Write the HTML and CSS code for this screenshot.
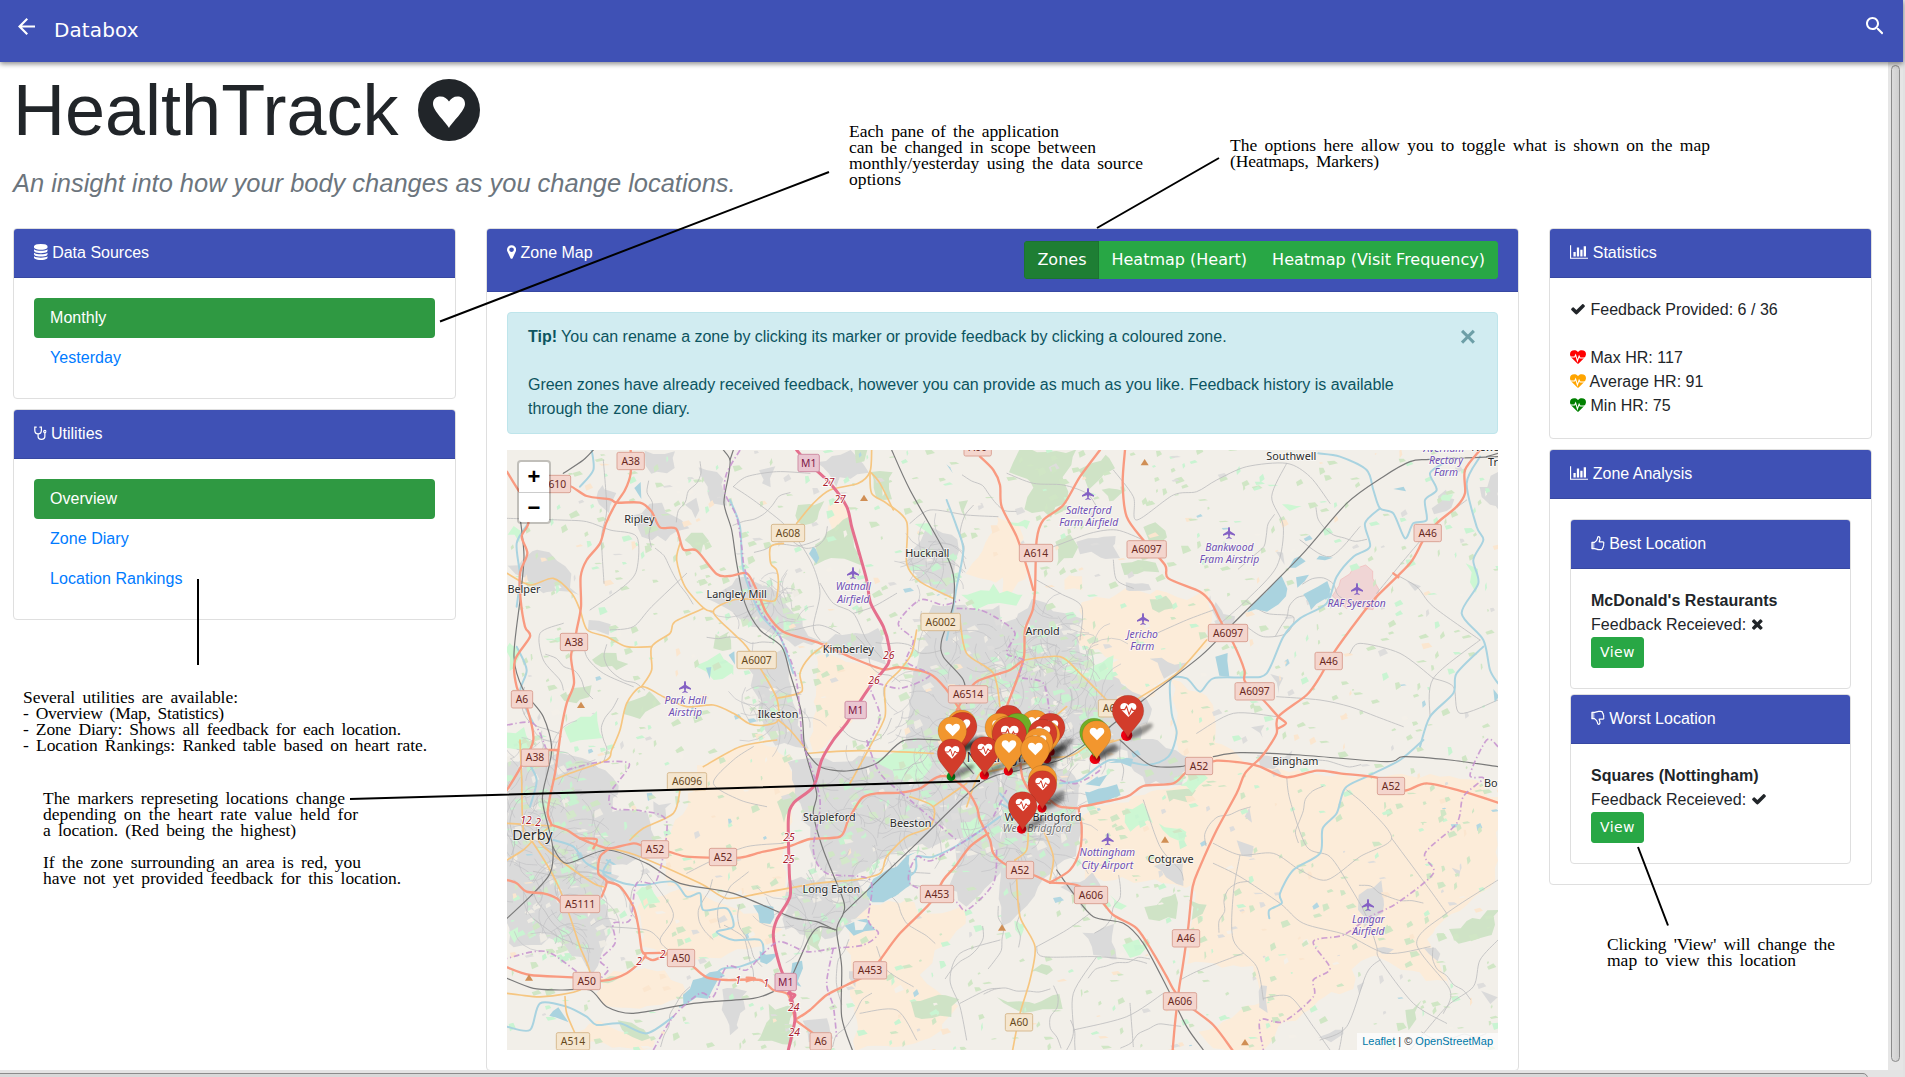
FILE: index.html
```html
<!DOCTYPE html>
<html lang="en">
<head>
<meta charset="utf-8">
<title>Databox - HealthTrack</title>
<link rel="stylesheet" href="styles.css">
</head>
<body>
<svg class="defs" width="0" height="0">
  <defs>
    <symbol id="database" viewBox="128 0 1536 1792"><path d="M896 768q237 0 443-43t325-127v170q0 69-103 128t-280 93.500-385 34.500-385-34.500-280-93.500-103-128v-170q119 84 325 127t443 43zm0 768q237 0 443-43t325-127v170q0 69-103 128t-280 93.500-385 34.500-385-34.500-280-93.500-103-128v-170q119 84 325 127t443 43zm0-384q237 0 443-43t325-127v170q0 69-103 128t-280 93.500-385 34.500-385-34.500-280-93.500-103-128v-170q119 84 325 127t443 43zm0-1152q208 0 385 34.500t280 93.500 103 128v128q0 69-103 128t-280 93.500-385 34.500-385-34.500-280-93.500-103-128v-128q0-69 103-128t280-93.500 385-34.500z"/></symbol>
    <symbol id="pin" viewBox="384 0 1024 1792"><path d="M1152 640q0-106-75-181t-181-75-181 75-75 181 75 181 181 75 181-75 75-181zm256 0q0 109-33 179l-364 774q-16 33-47.500 52t-67.500 19-67.500-19-46.500-52l-365-774q-33-70-33-179 0-212 150-362t362-150 362 150 150 362z"/></symbol>
    <symbol id="chart" viewBox="0 0 2048 1792"><path d="M640 896v512h-256v-512h256zm384-512v1024h-256v-1024h256zm1024 1152v128h-2048v-1536h128v1408h1920zm-640-896v768h-256v-768h256zm384-384v1152h-256v-1152h256z"/></symbol>
    <symbol id="check" viewBox="0 0 1792 1792"><path d="M1671 566q0 40-28 68l-724 724-136 136q-28 28-68 28t-68-28l-136-136-362-362q-28-28-28-68t28-68l136-136q28-28 68-28t68 28l294 295 656-657q28-28 68-28t68 28l136 136q28 28 28 68z"/></symbol>
    <symbol id="times" viewBox="192 0 1408 1792"><path d="M1490 1322q0 40-28 68l-136 136q-28 28-68 28t-68-28l-294-294-294 294q-28 28-68 28t-68-28l-136-136q-28-28-28-68t28-68l294-294-294-294q-28-28-28-68t28-68l136-136q28-28 68-28t68 28l294 294 294-294q28-28 68-28t68 28l136 136q28 28 28 68t-28 68l-294 294 294 294q28 28 28 68z"/></symbol>
    <symbol id="heart" viewBox="0 0 1792 1792"><path d="M896 1664q-26 0-44-18l-624-602q-10-8-27.500-26t-55.500-65.500-68-97.500-53.500-121-23.500-138q0-220 127-344t351-124q62 0 126.500 21.500t120 58 95.500 68.500 76 68q36-36 76-68t95.500-68.500 120-58 126.500-21.500q224 0 351 124t127 344q0 221-229 450l-623 600q-18 18-44 18z"/></symbol>
    <symbol id="stetho" viewBox="0 0 12.6 16"><g fill="none" stroke="currentColor" stroke-width="1.25" stroke-linecap="round"><path d="M2.3 2H.8v3.2c0 2 1.200 3.600 3.300 3.600s3.300-1.600 3.300-3.600V2H5.900M4.100 9v2.300c0 1.900 1.400 3.100 3.300 3.100s3.500-1.200 3.500-3.100V8"/><circle cx="10.900" cy="6.600" r="1.200"/></g></symbol>
    <symbol id="thumb" viewBox="0 0 13.7 16"><path d="M1 7.300h2.600c1.500-1 2.600-2.300 2.800-3.700.1-1 .3-1.900 1-1.900 1.300 0 1.600 1 1.500 2.200 0 1-.6 1.800-.7 2.900h3.300c1.400 0 1.800 1.200 1 2.200.5.900.3 1.700-.3 2.200.2.900-.1 1.500-.7 1.900.1 1-.6 1.500-1.900 1.500H7.700c-1.500 0-2.300-.8-4-1H1z" fill="none" stroke="currentColor" stroke-width="1.200" stroke-linejoin="round"/><path d="M.7 7h2.700v7H.7z" opacity=".55"/></symbol>
  </defs>
</svg>

<div class="viewport">
  <header class="topbar">
    <svg class="back" viewBox="4 4 16 16"><path d="M20 11H7.830l5.590-5.590L12 4l-8 8 8 8 1.410-1.410L7.830 13H20v-2z"/></svg>
    <span class="brand">Databox</span>
    <svg class="search" viewBox="3 3 17.500 17.500"><path d="M15.500 14h-.79l-.28-.27C15.410 12.590 16 11.110 16 9.500 16 5.910 13.090 3 9.500 3S3 5.910 3 9.500 5.910 16 9.500 16c1.610 0 3.090-.59 4.230-1.570l.27.28v.79l5 4.990L20.490 19l-4.990-5zm-6 0C7.010 14 5 11.990 5 9.500S7.010 5 9.500 5 14 7.010 14 9.500 11.990 14 9.500 14z"/></svg>
  </header>

  <div class="scroller">
    <main class="content">
      <h1 class="title">HealthTrack
        <svg class="badge" viewBox="0 0 62 62"><circle cx="31" cy="31" r="31"/><path class="hole" d="M31 49C28 43 15 32 15 25c0-5 3-7.500 7.500-7.500 4 0 6.500 2 8.500 5 2-3 4.500-5 8.500-5 4.500 0 7.500 2.500 7.500 7.500 0 7-13 18-16 24z"/></svg>
      </h1>
      <p class="lead">An insight into how your body changes as you change locations.</p>

      <div class="columns">
        <div class="stack left">
          <section class="card">
            <h2 class="card-header"><svg class="ic w14"><use href="#database"/></svg> Data Sources</h2>
            <nav class="card-body pills"><a class="active">Monthly</a><a>Yesterday</a></nav>
          </section>
          <section class="card">
            <h2 class="card-header"><svg class="ic w13"><use href="#stetho"/></svg> Utilities</h2>
            <nav class="card-body pills"><a class="active">Overview</a><a>Zone Diary</a><a>Location Rankings</a></nav>
          </section>
        </div>

        <section class="card middle">
          <h2 class="card-header tools"><span><svg class="ic w9"><use href="#pin"/></svg> Zone Map</span>
            <span class="btn-group"><button class="on">Zones</button><button>Heatmap (Heart)</button><button>Heatmap (Visit Frequency)</button></span>
          </h2>
          <div class="card-body">
            <div class="alert">
              <p><b>Tip!</b> You can rename a zone by clicking its marker or provide feedback by clicking a coloured zone.<br><br>Green zones have already received feedback, however you can provide as much as you like. Feedback history is available through the zone diary.</p>
              <span class="close">×</span>
            </div>
            <div class="map">
              <svg id="map" viewBox="21 30 2973 1800" width="991" height="600"></svg>
              <div class="zoom"><span>+</span><span>−</span></div>
              <div class="credit"><a>Leaflet</a> | © <a>OpenStreetMap</a></div>
            </div>
          </div>
        </section>

        <div class="stack right">
          <section class="card">
            <h2 class="card-header"><svg class="ic w18"><use href="#chart"/></svg> Statistics</h2>
            <div class="card-body">
              <p><svg class="ic w16"><use href="#check"/></svg> Feedback Provided: 6 / 36</p>
              <p>&nbsp;</p>
              <p><svg class="ic w16 max" viewBox="0 0 1792 1792"><use href="#heart"/><path class="beat" d="M0 896h520l110-230 200 680 190-560 110 220h662"/></svg> Max HR: 117</p>
              <p><svg class="ic w16 avg" viewBox="0 0 1792 1792"><use href="#heart"/><path class="beat" d="M0 896h520l110-230 200 680 190-560 110 220h662"/></svg> Average HR: 91</p>
              <p><svg class="ic w16 min" viewBox="0 0 1792 1792"><use href="#heart"/><path class="beat" d="M0 896h520l110-230 200 680 190-560 110 220h662"/></svg> Min HR: 75</p>
            </div>
          </section>
          <section class="card">
            <h2 class="card-header"><svg class="ic w18"><use href="#chart"/></svg> Zone Analysis</h2>
            <div class="card-body zones">
              <section class="card">
                <h2 class="card-header"><svg class="ic w14"><use href="#thumb"/></svg> Best Location</h2>
                <div class="card-body"><p><b>McDonald's Restaurants</b></p><p>Feedback Receieved: <svg class="ic w13"><use href="#times"/></svg></p><button class="view">View</button></div>
              </section>
              <section class="card">
                <h2 class="card-header"><svg class="ic w14 down"><use href="#thumb"/></svg> Worst Location</h2>
                <div class="card-body"><p><b>Squares (Nottingham)</b></p><p>Feedback Receieved: <svg class="ic w16"><use href="#check"/></svg></p><button class="view">View</button></div>
              </section>
            </div>
          </section>
        </div>
      </div>
    </main>
    <div class="vbar"><i></i></div>
  </div>
  <div class="hbar"><i></i></div>
</div>

<svg class="notes" width="1905" height="1077">
  <g class="pointers"><path d="M440 321.500L829 172M1097 228l122-70M198 579v86M350 799l630-18M1638 847l30 78.500"/></g>
  <g class="words">
    <text x="849" y="137" textLength="210">Each pane of the application</text>
    <text x="849" y="153" textLength="247">can be changed in scope between</text>
    <text x="849" y="169" textLength="294">monthly/yesterday using the data source</text>
    <text x="849" y="185" textLength="52">options</text>
    <text x="1230" y="151" textLength="480">The options here allow you to toggle what is shown on the map</text>
    <text x="1230" y="167" textLength="149">(Heatmaps, Markers)</text>
    <text x="23" y="703" textLength="215">Several utilities are available:</text>
    <text x="23" y="719" textLength="201">- Overview (Map, Statistics)</text>
    <text x="23" y="735" textLength="378">- Zone Diary: Shows all feedback for each location.</text>
    <text x="23" y="751" textLength="404">- Location Rankings: Ranked table based on heart rate.</text>
    <text x="43" y="804" textLength="302">The markers represeting locations change</text>
    <text x="43" y="820" textLength="315">depending on the heart rate value held for</text>
    <text x="43" y="836" textLength="253">a location. (Red being the highest)</text>
    <text x="43" y="868" textLength="318">If the zone surrounding an area is red, you</text>
    <text x="43" y="884" textLength="358">have not yet provided feedback for this location.</text>
    <text x="1607" y="950" textLength="228">Clicking 'View' will change the</text>
    <text x="1607" y="966" textLength="189">map to view this location</text>
  </g>
</svg>
<script src="map.js"></script>
</body>
</html>
```
FILE: styles.css
```css
* { box-sizing: border-box; }
body { margin: 0; width: 1905px; height: 1077px; overflow: hidden; position: relative; background: #fff; color: #212529; font: 16px/24px "Liberation Sans", Arial, sans-serif; }
.defs { position: absolute; }
p, h1, h2 { margin: 0; font-weight: 400; }
svg { fill: currentColor; }

.viewport { height: 1077px; display: flex; flex-direction: column; border-right: 2px solid #e2e2e2; }
.topbar { flex: none; height: 62px; background: #3f51b5; color: #fff; display: flex; align-items: flex-start; padding: 17px 20px 0 18px; box-shadow: 0 2px 5px rgba(0,0,0,.45); position: relative; z-index: 1; }
.back { width: 17px; height: 17px; margin-top: 1px; }
.brand { margin: 1px auto 0 19px; font: 20px/24px "DejaVu Sans", sans-serif; letter-spacing: .1px; }
.search { width: 17.500px; height: 17.500px; }

.scroller { flex: 1; min-height: 0; display: flex; }
.content { flex: 1; min-width: 0; padding: 0 16px 0 13px; overflow: hidden; }
.vbar { width: 15px; padding: 3px 3px 8px; background: #e6e6e6; display: flex; }
.vbar i { flex: 1; border: 1px solid #8b8b8b; border-radius: 5px; background: linear-gradient(90deg, #dcdcdc, #cfcfcf); }
.hbar { flex: none; height: 7px; overflow: hidden; background: #e4e4e4; padding: 3px 35px 0 0; }
.hbar i { display: block; height: 10px; margin-left: -6px; border: 1px solid #8b8b8b; border-radius: 5px; background: #d8d8d8; }

.title { font-size: 72px; line-height: 86px; height: 96px; padding-top: 5px; white-space: nowrap; }
.badge { width: 62px; height: 62px; vertical-align: -6px; margin-left: 0; }
.hole { fill: #fff; }
.lead { height: 70px; padding-top: 9px; font-size: 25.450px; line-height: 32px; font-style: italic; color: #6c757d; }

.columns { display: grid; grid-template-columns: 443px 1033px 323px; column-gap: 30px; align-items: start; }
.stack { display: flex; flex-direction: column; gap: 10px; }
.card { border: 1px solid #dfdfdf; border-radius: 4px; background: #fff; }
.card-header { font-size: 16px; line-height: 24px; padding: 12px 20px; height: 49px; background: #3f51b5; color: #fff; border-bottom: 1px solid #3748a2; border-radius: 3px 3px 0 0; }
.card-body { padding: 20px; }
.right .card-body p { letter-spacing: .02px; }
.ic { height: 16px; vertical-align: -2px; }
.w9 { width: 9.140px; } .w13 { width: 12.570px; } .w14 { width: 13.710px; } .w16 { width: 16px; } .w18 { width: 18.280px; }
.down { transform: scaleY(-1); }
.max { color: red; } .avg { color: orange; } .min { color: green; }
.beat { fill: none; stroke: #fff; stroke-width: 120; }

.pills { display: flex; flex-direction: column; }
.pills a { padding: 8px 16px; border-radius: 4px; color: #007bff; letter-spacing: .05px; }
.pills .active { background: #2f9942; color: #fff; }

.middle { height: 843px; }
.tools { height: 63px; display: flex; justify-content: space-between; padding: 12px 20px 0; }
.btn-group { display: flex; height: 38px; border-radius: 4px; overflow: hidden; }
button { font: 16px/24px "DejaVu Sans", sans-serif; color: #fff; background: #28a745; border: 1px solid #28a745; padding: 6px 12px; margin: 0; white-space: nowrap; }
.btn-group button + button { margin-left: -1px; }
.btn-group .on { background: #1e7e34; border-color: #1c7430; position: relative; }
.alert { display: flex; justify-content: space-between; height: 122px; margin-bottom: 16px; padding: 12px 20px; border: 1px solid #bee5eb; border-radius: 4px; background: #d1ecf1; color: #0c5460; letter-spacing: -.02px; }
.alert p { width: 900px; }
.close { font: bold 28px/24px "Liberation Sans", Arial, sans-serif; opacity: .5; margin-right: 1px; }

.map { position: relative; height: 600px; overflow: hidden; background: #f2efe9; }
.map > svg { display: block; }
.zoom { position: absolute; left: 10px; top: 10px; width: 34px; border: 2px solid rgba(0,0,0,.2); border-radius: 4px; background: #fff; background-clip: padding-box; font: bold 22px/30px "Liberation Sans", Arial, sans-serif; color: #000; text-align: center; }
.zoom span { display: block; height: 30px; }
.zoom span + span { border-top: 1px solid #ccc; }
.credit { position: absolute; right: 0; bottom: 0; padding: 0 5px; background: rgba(255,255,255,.7); color: #333; font-size: 11px; line-height: 17px; }
.credit a { color: #0078a8; }

.zones { display: flex; flex-direction: column; gap: 5px; }
.view { display: block; height: 31px; padding: 4px 8px; font-size: 14px; line-height: 21px; border-radius: 3px; letter-spacing: .4px; }

.notes { position: absolute; left: 0; top: 0; z-index: 3; }
.pointers { stroke: #000; stroke-width: 2; fill: none; }
.words { font: 17.500px "Liberation Serif", "Times New Roman", serif; word-spacing: 3px; fill: #000; }

.farm { fill: #fcecd9; } .urban { fill: #dadada; } .wood { fill: #cfe3c6; } .park { fill: #cdf7d3; } .lake { fill: #aad3df; } .field { fill: #f2efe9; } .airbase { fill: #f0d5d5; stroke: #f0b8b8; stroke-width: 2; }
.minor, .trunk, .motor, .second, .rail, .river, .bound, .street { fill: none; stroke-linejoin: round; stroke-linecap: round; }
.street { stroke: #c2c2c5; stroke-width: 2; }
.minor { stroke: #bfbfc0; stroke-width: 2.600; }
.second { stroke: #f6c681; stroke-width: 5; }
.trunk { stroke: #f99a80; stroke-width: 7; }
.motor { stroke: #e56f8d; stroke-width: 9; }
.rail { stroke: #7a7a7a; stroke-width: 3.600; }
.river { stroke: #a9d3e0; stroke-width: 6; }
.bound { stroke: #c691cf; stroke-width: 5; stroke-dasharray: 18 8 4 8; stroke-opacity: .85; stroke-linecap: butt; }
.town, .air, .junc, .city, .suburb { font-family: "Noto Sans", sans-serif; text-anchor: middle; paint-order: stroke; stroke: rgba(255,255,255,.65); stroke-width: 5; }
.town { font-size: 32.500px; fill: #2b2b2b; }
.city { font-size: 43px; fill: #2b2b2b; }
.suburb { font-size: 31px; font-style: italic; fill: #777; }
.air { font-size: 31px; font-style: italic; fill: #6f4fb3; }
.junc { font-size: 31px; font-style: italic; fill: #a8202c; stroke: #fff; }
.shield { font: 31px "Noto Sans", sans-serif; text-anchor: middle; }
.plane { fill: #8461c4; }
.peak { fill: #d08f55; }
```
FILE: map.js
```js
// Map units are thirds of a pixel. Quadrant offsets: nw, ne, sw, se.
const Q = { nw: [0, 0], ne: [1500, 0], sw: [0, 900], se: [1500, 900] };
const out = [];
const pts = (q, s) => s.trim().split(/\s+/).map(p => {
  const [x, y] = p.split(',').map(Number);
  return [x + Q[q][0], y + Q[q][1]];
});
// Catmull-Rom spline through the points
function smooth(p) {
  let d = `M${p[0]}`;
  for (let i = 0; i < p.length - 1; i++) {
    const a = p[i - 1] || p[i], b = p[i], c = p[i + 1], e = p[i + 2] || c;
    d += `C${b[0] + (c[0] - a[0]) / 7},${b[1] + (c[1] - a[1]) / 7} ${c[0] - (e[0] - b[0]) / 7},${c[1] - (e[1] - b[1]) / 7} ${c}`;
  }
  return d;
}
let seed = 7;
const rnd = () => (seed = (seed * 16807) % 2147483647) / 2147483647;

// roughen polygon edges so land use looks natural
function area(cls, q, s) {
  s.split('|').forEach(part => {
    const p = pts(q, part), r = [];
    p.forEach((a, i) => {
      const b = p[(i + 1) % p.length], n = Math.max(1, Math.round(Math.hypot(b[0] - a[0], b[1] - a[1]) / 28));
      for (let k = 0; k < n; k++) r.push([a[0] + (b[0] - a[0]) * k / n + (rnd() - .5) * 20, a[1] + (b[1] - a[1]) * k / n + (rnd() - .5) * 20].map(v => v.toFixed(0)));
    });
    out.push(`<path class="${cls}" d="M${r.join('L')}z"/>`);
  });
}
const line = (cls, q, s) => s.split('|').forEach(part => out.push(`<path class="${cls}" d="${smooth(pts(q, part))}"/>`));

area('farm', 'nw', '960,640 1150,690 1110,720 1080,800 980,920 935,930 945,760|1400,400 1440,330 1494,240 1560,260 1580,360 1494,420|980,200 1040,190 1050,260 1000,260');
area('farm', 'ne', '0,220 50,300 90,390 20,480 0,470|240,490 370,450 470,455 560,480 620,450 640,520 610,620 440,780 340,720 350,650 240,620|520,725 620,760 650,850 640,930 530,930|200,400 245,410 240,450 190,450');
area('farm', 'se', '530,0 650,0 700,40 780,90 1080,110 1400,110 1494,180 1494,420 1350,520 1280,600 1360,740 1200,690 1130,640 1060,680 1060,740 990,760 860,850 780,930 640,930 600,880 790,780 760,680 560,670 580,440 430,420 250,420 240,220 380,180 560,130');
area('farm', 'sw', '600,80 780,0 860,60 900,140 850,320 860,480 500,430 500,300 560,190|420,480 540,440 840,560 800,620 600,660 430,620|300,710 400,690 500,700 560,760 420,810 300,790|1040,600 1290,520 1380,500 1400,560 1250,700 1370,800 1300,900 1070,930|170,900 300,850 460,900 450,930|1050,500 1250,480 1260,540 1060,640');
area('urban', 'nw', '400,220 480,190 560,260 500,300 420,290|620,470 740,400 850,480 950,600 880,620 760,560|1220,380 1280,250 1380,300 1360,470 1260,430|1300,500 1500,500 1500,1100 1200,960 1240,700|30,380 120,330 200,380 230,460 120,450|740,650 850,630 920,930 800,900|940,60 1060,40 1100,90 1000,130|960,600 1140,570 1160,670 1000,640|440,40 520,30 530,90 450,100|270,545 330,550 320,580 270,575|300,130 340,150 320,220 290,200|600,90 670,110 670,200 640,190|780,90 820,80 820,140 790,140|560,190 590,180 590,230');
area('urban', 'ne', '0,560 100,480 240,540 240,640 350,720 460,800 420,900 300,950 0,950|230,300 340,280 350,350 240,340|370,430 450,430 450,450 370,455|1440,150 1500,100 1500,220 1460,190|1290,200 1340,150 1370,180 1310,220|640,490 700,530 690,560 650,540|750,860 790,850 790,900|810,710 850,710 840,760|830,340 850,330 850,370|450,650 560,670 500,720|1230,420 1260,430 1240,450');
area('urban', 'sw', '21,60 160,40 280,60 360,130 330,210 440,220 460,300 360,400 300,450 330,560 280,700 180,600 21,620|860,60 1300,50 1500,0 1500,330 1400,300 1200,330 1060,420 960,400|870,420 1060,400 1110,500 1000,600 850,560|660,750 740,750 720,850 690,890|1380,300 1500,250 1500,400 1400,500 1350,440|910,850 980,830 1000,900 930,900|460,180 510,190 500,240 460,220|21,300 200,310 250,420 200,520 40,450|1040,700 1080,690 1060,740');
area('urban', 'se', '0,0 230,100 240,260 220,340 150,400 40,540 0,550|340,0 480,0 560,60 540,130 440,130|250,580 340,560 350,660 280,650|470,370 550,370 550,440 500,420|720,310 760,310 750,350 720,350|780,740 800,740 800,810 780,810|780,50 880,40 870,80 790,80|1070,730 1100,730 1080,770|1130,620 1190,630 1150,650|950,890 1040,860 1000,910|1280,620 1330,640 1310,660|1450,760 1490,770 1470,790|1070,460 1140,430 1150,520 1090,560|190,440 280,400 310,470 240,500|1360,380 1385,390 1370,405|760,250 740,210 730,240');
area('airbase', 'ne', '1090,375 1110,390 1140,440 1110,500 1040,500 1005,470 1015,420');
area('wood', 'nw', '550,300 600,275 635,300 600,350|960,300 1040,230 1060,310 1080,380 1000,350 940,370|1120,100 1170,90 1170,180 1120,180|380,790 450,750 480,790 420,830 370,820|280,650 340,640 380,680 300,690|1060,30 1100,30 1090,70 1060,60|190,760 270,740 270,780 200,790|640,590 690,570 700,620 640,630|900,200 970,190 960,240 890,250|1380,180 1400,180 1400,240');
area('wood', 'ne', '60,30 220,30 190,130 200,190 150,230 80,210 100,120 30,90|240,80 320,40 340,90 270,140|430,270 470,250 510,290 450,330|370,370 470,370 470,400 380,400|300,150 370,160 330,190|450,480 490,460 520,510 450,510|170,300 210,290 240,330 170,380');
area('wood', 'se', '440,500 530,460 530,540 450,530|570,480 625,490 580,540|1350,570 1440,530 1494,510 1480,590 1380,620|480,140 580,160 560,190 500,180|0,780 80,790 180,760 180,800 60,820|90,690 150,670 160,700|1210,820 1270,780 1230,870');
area('wood', 'sw', '920,570 970,560 960,640 920,610|1240,790 1310,760 1370,780 1360,830 1240,830|830,190 870,150 900,160 850,250|300,720 360,700 330,740|360,850 440,870 450,900 380,890|810,800 880,810 870,910 780,910');
area('park', 'nw', '21,600 60,620 50,680 21,690|590,670 650,640 710,700 640,710|21,880 80,860 90,930 21,930|190,860 290,820 300,900 210,900|1250,260 1290,250 1290,290|1380,460 1490,440 1500,490 1420,510|21,280 50,250 60,300|840,540 880,560 860,570');
area('park', 'ne', '180,680 260,690 350,650 330,710 260,720|0,450 70,460 40,500 0,490|20,240 100,240 90,270|840,190 910,200 870,210|1400,380 1430,390 1420,450|1310,180 1350,160 1350,190');
area('park', 'sw', '1130,50 1250,20 1300,60 1270,130 1190,110|1350,0 1490,40 1470,110 1360,80|400,450 470,450 480,490 430,500|90,170 150,180 140,220|21,580 60,570 40,610|1380,240 1450,230 1440,280 1390,290');
area('park', 'se', '370,210 430,190 460,240 390,270|540,130 600,90 630,120 580,150|370,620 410,590 440,620 390,650|470,250 550,260 550,310 500,300|330,470 390,490 350,510|40,540 80,560 60,590');

// scattered hedgerows, copses, hamlets and ponds
function patch(x, y, size, c) {
  const w = 4 + rnd() * size, h = 3 + rnd() * size * .7;
  out.push(`<path fill="${c}" d="M${x | 0} ${y | 0}l${w | 0} ${-h * rnd() | 0} ${w * .5 | 0} ${h | 0} ${-w * 1.2 | 0} ${h * .7 | 0}z"/>`);
}
for (let i = 0; i < 1500; i++) {
  const t = rnd();
  patch(21 + rnd() * 2973, 30 + rnd() * 1800, 19, t < .54 ? '#d0e6c5' : t < .74 ? '#c9f4d2' : t < .84 ? '#dedddc' : t < .87 ? '#b3d7e2' : t < .95 ? '#fbe6cf' : '#f4f0e9');
}
// parks and street grid inside the built-up areas
const built = [[1400, 780, 230], [1620, 760, 200], [1450, 1040, 230], [1560, 1120, 160], [160, 1200, 170], [180, 1400, 160], [1120, 1130, 170], [960, 1380, 110], [1300, 380, 80], [820, 790, 90], [800, 500, 100], [1660, 640, 130], [120, 1000, 120], [1700, 850, 130]];
built.forEach(([cx, cy, r]) => {
  for (let i = 0; i < r / 3; i++) {
    const a = rnd() * 6.3, k = Math.sqrt(rnd()) * r, t = rnd();
    patch(cx + Math.cos(a) * k, cy + Math.sin(a) * k, 22, t < .45 ? '#c8f2d0' : t < .75 ? '#d3e8ca' : '#eeebe4');
  }
  for (let i = 0; i < r / 4; i++) {
    const a = rnd() * 6.3, k = Math.sqrt(rnd()) * r, x = cx + Math.cos(a) * k, y = cy + Math.sin(a) * k, b = rnd() * 6.3, n = 25 + rnd() * 60;
    out.push(`<path class="street" d="M${x | 0} ${y | 0}q${Math.cos(b) * n | 0} ${Math.sin(b) * n | 0} ${Math.cos(b + .5) * n * 1.5 | 0} ${Math.sin(b + .5) * n * 1.5 | 0}"/>`);
  }
});
for (let i = 0; i < 55; i++) {
  let x = 21 + rnd() * 2973, y = 30 + rnd() * 1800, a = rnd() * 6.3;
  const p = [[x | 0, y | 0]];
  for (let k = 0; k < 6; k++) { a += (rnd() - .5) * 1.3; x += Math.cos(a) * 34; y += Math.sin(a) * 34; p.push([x | 0, y | 0]); }
  out.push(`<path class="minor" d="${smooth(p)}"/>`);
}
line('minor', 'nw', '310,60 320,210 305,290 312,430|21,235 180,240 260,245 330,270 410,290 410,390 370,440 270,510|190,550 120,580 130,660 180,720 190,750|330,570 400,560 455,500 560,400|700,140 740,110 830,95 930,100|700,140 760,180 850,250 900,310 940,380 960,460 940,560 960,600|1230,250 1290,210 1400,225 1494,230|960,430 1000,490 1060,520 1100,600 1150,660|1060,520 1120,500 1190,460|250,590 260,650 310,700 400,740');
line('minor', 'ne', '21,100 100,130 190,135 260,160 290,200|340,90 400,170 410,240 520,165 590,155 650,120 740,80 860,70 930,110 990,190|860,70 815,170 850,260 830,380 740,480 650,560|430,300 350,270 270,280 160,320 110,330|110,420 180,460 245,500 240,600|340,360 350,420 400,445|740,485 800,520 880,530 860,580 790,590 740,560|1180,400 1250,440 1300,500 1440,600|1440,600 1300,715 1290,830|830,770 960,780 1050,800 1130,830 1210,860|1050,640 1080,610 1200,640 1300,715|590,880 700,820 830,830|1130,460 1290,270 1400,180|900,300 990,350 1080,260|470,580 560,540 640,510|1300,715 1360,740 1380,820 1494,780');
line('minor', 'sw', '760,20 700,60 640,130 720,180 800,200|440,400 520,520 480,600 520,640|320,560 440,570 480,600|560,400 640,360 740,320 850,310|1290,400 1200,400 1140,440|1380,790 1460,750 1500,745|1500,600 1380,640 1350,720 1380,800 1400,900|1130,620 1160,690 1240,740|1080,820 1190,810 1250,900');
line('minor', 'se', '860,110 870,180 920,320 990,350 1050,440 1100,530 1130,620 1140,660 1240,790 1340,850|640,310 720,345 820,340 900,390 980,420 1080,350 1175,295 1100,200 1040,150|1175,295 1290,450 1340,520|640,370 720,410 840,490 910,550 1040,585 1160,640 1290,620|720,345 700,460 700,600 770,680 790,780|540,720 600,690 730,640|110,620 200,570 270,520|110,620 130,650 290,650 400,660 440,670|290,650 220,760 220,880 200,930|220,870 380,830 490,760|390,790 400,920|790,775 870,770 940,860 990,930|1494,420 1340,520 1250,610 1350,750 1330,820|1494,600 1440,660 1420,740 1340,800 1230,930|960,900 1040,860 1100,700 1140,660|430,180 480,320 540,390 550,420');

line('river', 'ne', '955,40 1020,50 1100,90 1120,150 1140,205 1180,220 1215,295 1240,250 1280,240 1275,180 1310,150 1290,100 1330,70|1140,205 1095,250 1110,320 1060,350 1010,410 980,490 900,535 850,590 800,700 740,712 640,715 600,755 560,715 512,720 515,820 530,880 505,950 440,975 330,960 240,1020 180,1030|1440,50 1400,130 1430,260 1450,300 1420,360 1435,430 1385,520 1450,600 1470,690 1494,730|1450,620 1370,700 1360,760 1290,830 1260,920');
line('river', 'se', '1270,0 1200,60 1100,110 1035,145 1010,220 968,265 960,340 880,390 840,460 845,490 808,510 808,535|0,160 40,210 0,190');
line('river', 'sw', '330,360 310,400 370,430 430,435 520,425 560,470 600,460 610,510 680,505 700,560 650,575 700,600 780,600 785,650 720,680 660,690 600,760 540,800|21,860 90,870 120,790 200,800 260,830 290,855 360,850 440,880 520,830|160,300 220,320 260,370 330,400 350,380 320,360|80,60 110,120 90,200|1500,230 1400,300 1300,350 1250,350 1240,400 1110,470');
line('river', 'nw', '1340,180 1370,260 1390,330 1370,440 1360,500 1340,600|85,250 50,310 60,410 50,500|275,30 280,90 240,140|690,180 720,260 730,390 780,520 840,590 880,700|50,620 80,690 60,760 100,850');
area('lake', 'ne', '750,510 790,460 850,410 855,470 800,510|920,460 980,430 985,480 930,510|860,380 900,340 910,370|880,410 920,410 890,440|940,350 990,360 970,370|650,660 680,640 680,700 660,700|1480,755 1494,760 1480,790|1190,150 1220,140 1220,160');
area('lake', 'se', '250,160 350,130 360,170 270,190|260,130 320,110 300,140|330,60 400,60 390,80');
area('lake', 'sw', '760,490 820,500 820,560 780,550|1100,470 1130,400 1210,370 1240,330 1230,430 1150,490|1040,560 1100,530 1120,570 1060,590|560,750 620,690 680,700 620,770 540,790|780,640 830,640 800,680|140,830 180,810 200,840 150,840|870,660 900,670 900,740 870,720');
area('lake', 'nw', '400,140 430,130 420,170|935,320 950,320 950,370 935,370|690,650 705,640 700,680|610,690 640,690 620,710|1340,80 1360,80 1350,100');
area('field', 'sw', '1060,545 1100,550 1070,580|340,370 420,390 410,430 330,410');

line('second', 'nw', '1115,30 1110,95 1075,130 990,150 940,190 890,250|850,310 812,320 812,370 830,390 835,430 825,482 770,478 700,480 640,515 700,580 740,620 790,700 830,775 835,840 800,855 750,852 700,820 640,795 560,800 490,770 425,740 380,790 360,870 335,930 320,960 210,1000 160,1020|1110,95 1115,160 1160,190 1220,245 1220,370 1260,425 1360,475|1110,95 1140,130 1180,210|540,310 530,360 555,440 612,505 640,515|612,505 525,545 510,580 455,620 455,690 425,740|455,620 380,620 320,590 262,570 240,510 215,460 160,415 90,435 21,400|1380,540 1400,640 1480,700 1500,800|1250,570 1235,640 1200,690 1155,740 1155,830 1110,920 1050,1030|980,610 930,650 900,700 905,755 830,775|835,840 870,870 920,930');
line('second', 'sw', '830,0 720,20 610,80|540,150 520,220 430,265 390,300|920,40 1080,32 1300,40|60,0 65,120 70,270 100,310 150,390 180,450 210,530 240,620 270,700 240,750 130,770 60,765 21,760|330,325 420,350 600,430 680,475 780,460 950,430 1060,420 1140,400 1160,350 1220,290 1290,260 1300,200 1230,170|195,770 200,820 225,880|155,255 115,300 180,360 280,430 310,440|21,360 70,330 100,300|21,250 155,258|1300,200 1400,130|1400,200 1440,100 1520,60');
line('second', 'ne', '70,660 180,650 240,700 330,790|415,775 530,700 620,600|320,910 390,890|0,880 120,860 200,800');
line('second', 'se', '45,360 50,420 60,530 105,620 90,720 60,820 38,930|130,270 160,350 150,420|85,260 80,330 45,360|0,55 200,50 260,20 340,0|-60,100 40,80 120,60|80,20 110,130 100,220');
line('rail', 'nw', '670,30 690,60 685,110 672,190 695,270 710,370 735,490 780,570 845,620 870,700 905,820 915,930 950,1060 940,1120 970,1230 1030,1380 1030,1420 1010,1470 1025,1580 1025,1730 1057,1830|280,30 250,60 190,100|60,230 72,350 60,480 42,650 70,750 130,830 155,930 130,1050 130,1100 158,1220 150,1300 100,1360 21,1435|1175,30 1230,150 1350,370 1360,490 1325,600 1330,650 1390,720 1400,790|915,930 960,980 1040,993 1130,970 1210,902 1320,900|700,30 690,60');
line('rail', 'sw', '158,320 200,370 320,330 440,370 540,430 700,460 870,530 950,545 1005,570|1030,520 1250,310 1440,130 1560,90 1680,60 1760,10 1830,-40|1010,570 960,560 930,590 880,700|820,755 760,775 580,790 400,820 320,800 270,750 180,750 100,745 21,715|1350,20 1420,100');
line('rail', 'ne', '1494,50 1290,58 1230,65 1150,110 1040,190 900,350 700,550 600,650 430,780 330,860|1494,40 1460,50');
line('rail', 'se', '640,50 720,38 900,45 1160,65 1210,50 1350,60 1494,80|360,0 450,75 540,80 560,75|170,390 220,460 280,530 370,550 430,610 500,740 560,860 610,930');
line('trunk', 'nw', '392,30 392,100 375,150 345,195 318,250 300,310 260,360 242,410 243,500 230,570 225,600 213,650 222,730 200,790 185,860 175,930 165,1000 150,1070 143,1120 155,1155|150,130 210,138 260,168 330,178 350,188 420,188 455,215 480,262 528,266 550,328 590,332 650,402 690,408 740,400 770,450 800,520 850,575 960,610 1060,655 1150,688 1200,682 1290,702 1340,750 1380,810|21,95 55,150 80,180 85,250 65,290 82,340 60,400 62,480 75,560 90,590 45,660 50,740 80,800 100,900 60,985 21,1050|1500,700 1430,725 1400,760 1370,810|1440,50 1480,90 1500,135 1505,200 1550,290 1580,380 1600,450');
line('trunk', 'sw', '140,30 175,30|155,255 200,270 240,295 290,315 330,325 400,310 430,318 505,335 560,350 640,353 720,353 790,335 865,320 930,297 1020,290 1045,240 1085,175 1130,160 1200,158 1260,145 1310,112 1350,112 1400,150 1430,200 1440,240 1470,300 1480,340 1520,375 1600,405 1650,428|240,295 290,298 280,325|21,420 50,430 80,455 130,460 170,475 190,500|330,325 300,350 295,400 320,425 305,470|320,425 360,440 400,500 415,560 425,630 435,650 380,700 310,722 220,712 90,705 21,682|435,650 460,660 500,640 430,640|580,680 620,712 680,720 780,720 820,750 865,765 885,840|885,840 930,810 980,765 1040,735 1110,700 1140,660 1200,580 1290,490 1330,420 1365,380 1410,320 1465,280|885,840 940,880 980,910|740,713 765,715 740,724');
line('trunk', 'ne', '300,30 240,110 190,195 130,240 110,300 105,450 98,510 75,570 72,650 50,720 20,800 10,830|375,30 368,130 380,230 430,300 495,375 505,415 600,455 635,490 660,540 700,610 733,690 735,725 790,780 835,830 858,850 835,865|0,700 30,690 70,660|1440,30 1395,90 1395,160 1370,200 1310,250 1270,300 1230,370 1130,470 1080,530 1000,640 960,710 920,765 835,830 830,880 800,930 780,955 735,1000 710,1060 650,1170 600,1280 578,1340 565,1460 548,1580 538,1640 525,1750 518,1830|1180,400 1195,412');
line('trunk', 'se', '150,428 210,390 240,330 245,260 237,205 270,195 380,170 430,138 520,130 560,95 600,80 650,62 740,70 780,80 860,112 950,92 1020,100 1140,115 1210,152 1280,130 1390,155 1494,188|237,205 180,200 150,180|150,428 230,435 300,480 340,525 410,565 460,640 500,710 525,755 570,800 640,855 697,930|60,60 70,120 110,180 150,190');
line('motor', 'nw', '890,30 920,65 990,130 1040,200 1055,260 1075,330 1100,420 1112,490 1150,560 1167,620 1165,670 1110,740 1070,800 1040,850 1000,900 965,960 940,1040 880,1090 865,1140 868,1300 870,1370 830,1440 820,1490 840,1580 865,1640 880,1700 885,1740 865,1830|865,1660 885,1665 870,1680');
line('bound', 'nw', '720,30 680,100 675,160 710,230 725,320 735,390 780,510 840,590 885,700 900,820 905,900|21,855 100,850 140,930|1100,920 1140,830 1110,730 1200,745 1290,705 1220,665 1240,600 1195,550 1260,480 1330,495 1380,480|1370,505 1440,510 1500,540 1545,580 1520,640 1570,660 1560,710 1630,730 1650,830');
line('bound', 'sw', '200,90 290,68 388,72 330,160 340,205 420,212 500,245 470,420 410,430 390,540 340,550 345,610 300,660 325,690 270,720 140,635 21,655|460,930 520,830 600,760 640,770 680,680 740,690 790,640 840,605 920,635 1000,625 1090,615 1135,580 1105,540 1110,420 980,400 940,330 960,180 905,0|1000,625 980,730 1000,800 1010,890|1100,0 1140,100 1230,180 1370,300|1490,330 1480,430 1400,510 1360,480 1230,430 1250,350 1300,360 1460,260');
line('bound', 'se', '1494,20 1460,0 1410,105 1450,115 1390,170 1370,250 1275,340 1300,400 1190,490 1110,530 1030,585 940,605 990,685 940,720 940,770 850,845 780,840 790,930|180,120 230,130 300,90 290,60|-20,230 20,150');

const SH = {
  t: ['#f4d5cd', '#dba497', '#6a291e'],
  s: ['#f5e6cf', '#d8bb91', '#67491b'],
  m: ['#eac6d1', '#cf8fa5', '#7c1747']
};
[['t', 392, 63, 'A38'], ['t', 162, 132, 'A610'], ['m', 926, 69, 'M1'], ['t', 1433, 22, 'A60'], ['s', 864, 279, 'A608'], ['s', 1322, 546, 'A6002'], ['t', 222, 606, 'A38'], ['s', 770, 660, 'A6007'], ['t', 66, 778, 'A6'], ['m', 1067, 810, 'M1'], ['t', 1404, 763, 'A6514'],
 ['t', 1608, 339, 'A614'], ['t', 1940, 328, 'A6097'], ['t', 2184, 579, 'A6097'], ['t', 2264, 754, 'A6097'], ['t', 2783, 279, 'A46'], ['t', 2486, 663, 'A46'], ['s', 1845, 805, 'A612'],
 ['t', 105, 953, 'A38'], ['s', 561, 1024, 'A6096'], ['t', 465, 1228, 'A52'], ['t', 669, 1251, 'A52'], ['t', 240, 1392, 'A5111'], ['t', 543, 1554, 'A50'], ['t', 260, 1623, 'A50'], ['s', 219, 1804, 'A514'], ['m', 857, 1626, 'M1'], ['t', 962, 1804, 'A6'], ['t', 1110, 1591, 'A453'], ['t', 1311, 1362, 'A453'],
 ['t', 2097, 978, 'A52'], ['t', 2673, 1038, 'A52'], ['t', 1560, 1290, 'A52'], ['t', 1773, 1365, 'A606'], ['t', 2058, 1495, 'A46'], ['t', 2040, 1684, 'A606'], ['s', 1557, 1747, 'A60']
].forEach(([k, x, y, s]) => {
  const w = 28 + s.length * 18, c = SH[k];
  out.push(`<rect x="${x - w / 2}" y="${y - 26}" width="${w}" height="52" rx="5" fill="${c[0]}" stroke="${c[1]}" stroke-width="3"/><text class="shield" x="${x}" y="${y + 11}" fill="${c[2]}">${s}</text>`);
});
[['town', 418, 249, 'Ripley'], ['town', 1282, 350, 'Hucknall'], ['town', 72, 458, 'Belper'], ['town', 710, 474, 'Langley Mill'], ['town', 1045, 639, 'Kimberley'], ['town', 834, 833, 'Ilkeston'], ['town', 2374, 60, 'Southwell'], ['town', 1628, 585, 'Arnold'], ['town', 3004, 77, 'Trent'], ['town', 2972, 34, 'Newark'],
 ['town', 988, 1144, 'Stapleford'], ['town', 1232, 1161, 'Beeston'], ['town', 994, 1359, 'Long Eaton'], ['city', 97, 1199, 'Derby'], ['city', 1522, 965, 'Nottingham'], ['town', 2386, 975, 'Bingham'], ['town', 2012, 1270, 'Cotgrave'], ['town', 1629, 1143, 'West Bridgford'], ['suburb', 1611, 1176, 'West Bridgford'], ['town', 3033, 1040, 'Bottesford'],
 ['air', 1060, 451, 'Watnall'], ['air', 1060, 488, 'Airfield'], ['air', 556, 792, 'Park Hall'], ['air', 556, 829, 'Airstrip'], ['air', 1766, 222, 'Salterford'], ['air', 1766, 259, 'Farm Airfield'], ['air', 2188, 333, 'Bankwood'], ['air', 2188, 370, 'Fram Airstrip'], ['air', 1927, 593, 'Jericho'], ['air', 1927, 630, 'Farm'], ['air', 2570, 500, 'RAF Syerston'], ['air', 2832, 36, 'Averham'], ['air', 2838, 72, 'Rectory'], ['air', 2838, 108, 'Farm'], ['air', 1822, 1249, 'Nottingham'], ['air', 1822, 1286, 'City Airport'], ['air', 2605, 1449, 'Langar'], ['air', 2605, 1486, 'Airfield'],
 ['junc', 986, 137, '27'], ['junc', 1020, 188, '27'], ['junc', 1166, 658, '26'], ['junc', 1122, 732, '26'], ['junc', 867, 1202, '25'], ['junc', 866, 1269, '25'], ['junc', 881, 1712, '24'], ['junc', 883, 1787, '24'], ['junc', 78, 1151, '12'], ['junc', 114, 1159, '2'], ['junc', 417, 1574, '2'], ['junc', 488, 1554, '2'], ['junc', 714, 1632, '1'], ['junc', 798, 1641, '1']
].forEach(([c, x, y, s]) => out.push(`<text class="${c}" x="${x}" y="${y}">${s}</text>`));
[[1059, 399], [555, 741], [1764, 162], [2187, 279], [1929, 537], [2571, 447], [1823, 1198], [2604, 1395]].forEach(([x, y]) =>
  out.push(`<path class="plane" transform="translate(${x} ${y})" d="M0-18c3 0 3 4 3 12L18 4v4L3 4 2 12l6 4v2l-8-2-8 2v-2l6-4-1-8-15 4V4L-3-6c0-8 0-12 3-12z"/>`));
[[1092, 174], [243, 795], [1934, 67], [87, 1613], [1995, 1199], [1506, 1463], [2235, 1807]].forEach(([x, y]) =>
  out.push(`<path class="peak" d="M${x - 12} ${y + 9}l12-19 12 19z"/>`));

// heart-rate markers
[[93, 290, 13, 'green'], [193, 285, 14, 'red'], [265, 273, 14, 'red'], [380, 236, 14, 'red'], [392, 215, 12, 'red'], [525, 236, 16, 'red'], [620, 166, 17, 'red'], [366, 384, 14, 'red'], [305, 447, 14, 'red']].forEach(([x, y, r, c]) =>
  out.push(`<circle cx="${x + 1260}" cy="${y + 720}" r="${r}" fill="${c === 'green' ? '#078a1a' : '#f00010'}"/>`));
const heart = 'M0 19L-18 1C-26-8-21-19-11-19-5-19-2-16 0-12 2-16 5-19 11-19 21-19 26-8 18 1z';
const fill = { r: '#d23c2b', o: '#f2962e', g: '#70ad26' };
[['o', 125, 90], ['r', 128, 97, 'h'], ['o', 97, 110, 'h'], ['r', 266, 76], ['o', 238, 100, 'h'], ['o', 345, 90, 'h'], ['r', 392, 100, 'h'], ['o', 265, 108], ['g', 292, 100], ['o', 258, 110], ['r', 268, 112, 'p', 1.2], ['o', 377, 122], ['r', 368, 118, 'h'], ['o', 356, 145, 'h'], ['r', 95, 177, 'p'], ['r', 194, 170, 'p'], ['o', 266, 160, 'h'], ['o', 345, 167, 'h'], ['g', 522, 115], ['o', 530, 122, 'h'], ['r', 624, 46, 'p', 1.1], ['o', 368, 256], ['r', 367, 272, 'p'], ['r', 308, 335, 'p']].forEach(([c, x, y, ic, k = 1]) => {
  out.push(`<g transform="translate(${x + 1260} ${y + 720}) scale(${k})"><ellipse cx="32" cy="98" rx="40" ry="11" transform="rotate(-28 32 98)" fill="#000" opacity=".38" filter="url(#soft)"/><path d="M0 0c26 0 43 19 43 43C43 72 12 90 0 116-12 90-43 72-43 43-43 19-26 0 0 0z" fill="${fill[c]}" stroke="#000" stroke-opacity=".16" stroke-width="2"/>` +
    (ic ? `<path transform="translate(1 40)" d="${heart}" fill="#fff"/>` : '') +
    (ic === 'p' ? `<path d="M-20 39h11l5-9 7 22 7-16 3 5h10" fill="none" stroke="${fill[c]}" stroke-width="3"/>` : '') + '</g>');
});
document.getElementById('map').innerHTML = '<filter id="soft" x="-50%" y="-80%" width="200%" height="260%"><feGaussianBlur stdDeviation="5"/></filter>' + out.join('');
```
